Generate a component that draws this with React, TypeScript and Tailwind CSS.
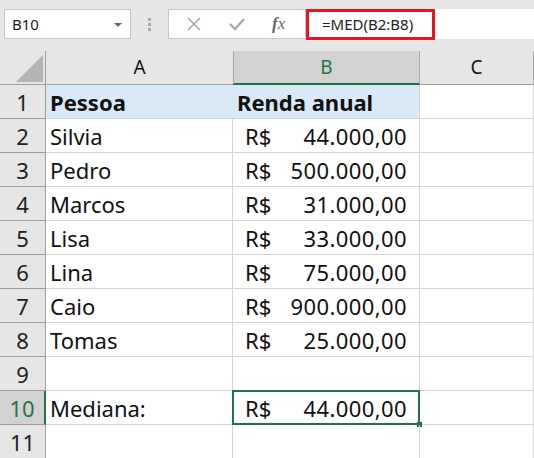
const rows: { n: number; a: string; b?: string; bold?: boolean }[] = [
  { n: 1, a: "Pessoa", b: "Renda anual", bold: true },
  { n: 2, a: "Silvia", b: "44.000,00" },
  { n: 3, a: "Pedro", b: "500.000,00" },
  { n: 4, a: "Marcos", b: "31.000,00" },
  { n: 5, a: "Lisa", b: "33.000,00" },
  { n: 6, a: "Lina", b: "75.000,00" },
  { n: 7, a: "Caio", b: "900.000,00" },
  { n: 8, a: "Tomas", b: "25.000,00" },
  { n: 9, a: "" },
  { n: 10, a: "Mediana:", b: "44.000,00" },
  { n: 11, a: "" },
];

const font = { fontFamily: '"Noto Sans", "Open Sans", sans-serif' };

export default function App() {
  return (
    <div className="h-[458px] w-[534px] overflow-hidden bg-white text-[#111]" style={font}>
      {/* formula bar */}
      <div className="flex h-[51px] items-start bg-[#e6e6e6] pt-[9px] pl-[4px]">
        <div className="flex h-[30px] w-[127px] items-center justify-between border border-[#c8c8c8] bg-white pr-[8px] pl-[7px]">
          <span className="text-[15px] text-[#222]">B10</span>
          <span className="mt-[2px] h-0 w-0 border-x-[4px] border-t-[4px] border-x-transparent border-t-[#666]" />
        </div>
        <div className="flex h-[30px] w-[37px] flex-col items-center justify-center gap-[2px]">
          <span className="h-[3px] w-[3px] bg-[#a8a8a8]" />
          <span className="h-[3px] w-[3px] bg-[#a8a8a8]" />
          <span className="h-[3px] w-[3px] bg-[#a8a8a8]" />
        </div>
        <div className="flex h-[30px] w-[138px] items-center border border-[#c8c8c8] bg-white">
          <svg width="14" height="14" viewBox="0 0 14 14" className="ml-[18px]">
            <path d="M1 1 L13 13 M13 1 L1 13" stroke="#a8a8a8" strokeWidth="1.6" />
          </svg>
          <svg width="16" height="14" viewBox="0 0 16 14" className="ml-[28px]">
            <path d="M1 7 L6 12 L15 2" stroke="#a8a8a8" strokeWidth="2.4" fill="none" />
          </svg>
          <span className="ml-[27px] text-[17px] italic text-[#666]" style={{ fontFamily: '"Liberation Serif", serif' }}>
            <span className="font-bold">f</span>x
          </span>
        </div>
        <div className="flex h-[30px] flex-1 items-center bg-white">
          <div className="flex h-[31px] w-[129px] items-center border-[3px] border-[#e8141e] pl-[13px] text-[15px] text-[#222]">
            =MED(B2:B8)
          </div>
        </div>
      </div>

      {/* column headers */}
      <div className="flex h-[34px] border-b border-[#9e9e9e] bg-[#e6e6e6] text-[19px]">
        <div className="relative w-[46px] border-r border-[#9e9e9e]">
          <svg width="27" height="27" viewBox="0 0 27 27" className="absolute top-[4px] left-[16px]">
            <path d="M27 0 L27 27 L0 27 Z" fill="#b4b4b4" />
          </svg>
        </div>
        <div className="flex w-[187px] items-center justify-center">A</div>
        <div className="-mb-px flex w-[187px] items-center justify-center border-x border-b-2 border-x-[#a8a8a8] border-b-[#217346] bg-[#d2d2d2] text-[#217346]">
          B
        </div>
        <div className="flex w-[114px] items-center justify-center border-r border-[#a8a8a8]">C</div>
      </div>

      {rows.map((r) => {
        const sel = r.n === 10;
        const head = r.bold;
        return (
          <div key={r.n} className="flex h-[34px] text-[22px]">
            <div
              className={`flex w-[46px] items-center justify-center border-b border-r pt-[1px] ${
                sel ? "border-r-2 border-b-[#9e9e9e] border-r-[#217346] bg-[#d2d2d2] text-[#217346]" : "border-[#9e9e9e] bg-[#e6e6e6] text-[#222]"
              }`}
            >
              {r.n}
            </div>
            <div
              className={`flex w-[187px] items-center border-b border-[#d4d4d4] pt-[1px] pl-[4px] ${
                head ? "bg-[#dae9f7] font-bold" : "border-r"
              }`}
            >
              {r.a}
            </div>
            <div
              className={`relative flex w-[187px] items-center border-b border-[#d4d4d4] pt-[1px] ${
                head ? "border-r bg-[#dae9f7] pl-[4px] font-bold" : "border-r pr-[12px] pl-[12px]"
              }`}
            >
              {head ? (
                r.b
              ) : r.b ? (
                <div className="flex w-full justify-between">
                  <span>R$</span>
                  <span className="tracking-[0.4px]">{r.b}</span>
                </div>
              ) : null}
              {sel && (
                <>
                  <div className="pointer-events-none absolute -top-px -right-px -bottom-px -left-px border-2 border-[#217346]" />
                  <div className="absolute -right-[3px] -bottom-[3px] h-[5px] w-[5px] bg-[#217346]" />
                </>
              )}
            </div>
            <div className="w-[114px] border-r border-b border-[#d4d4d4]" />
          </div>
        );
      })}
    </div>
  );
}
